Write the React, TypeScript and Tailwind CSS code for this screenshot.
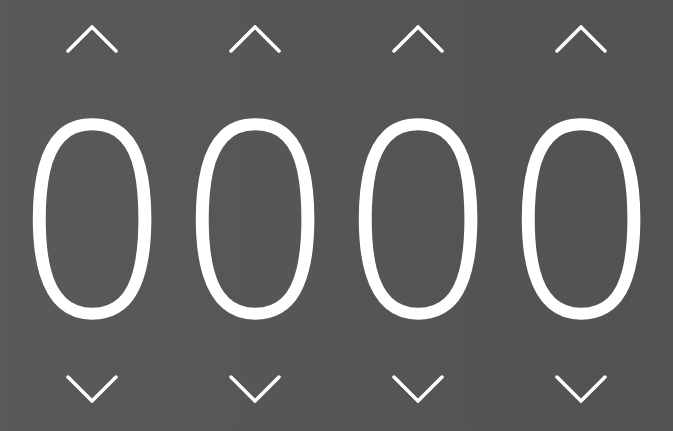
// Chevron drawn to match the thin wide carets of the picker
function Caret({ dir }: { dir: 'up' | 'down' }) {
    const points = dir === 'up' ? '2,26 26,2 50,26' : '2,2 26,26 50,2';
    return (
        <svg width="52" height="28" viewBox="0 0 52 28" fill="none">
            <polyline points={points} stroke="white" strokeWidth="3.5" strokeLinecap="round" strokeLinejoin="miter" />
        </svg>
    );
}

const digits = ['0', '0', '0', '0'];

export default function App() {
    return (
        <div className="w-full h-screen overflow-hidden bg-gradient-to-r from-[#5a5858] to-[#535151] flex justify-center">
            {digits.map((d, i) => (
                <div key={i} className="w-[163px] flex flex-col items-center">
                    <div className="mt-[25px]">
                        <Caret dir="up" />
                    </div>
                    <div
                        className="mt-[21px] h-[282px] text-white text-[274px] leading-none font-light scale-x-[0.95]"
                        style={{ fontFamily: '"Open Sans", sans-serif' }}
                    >
                        {d}
                    </div>
                    <div className="mt-[19px]">
                        <Caret dir="down" />
                    </div>
                </div>
            ))}
        </div>
    );
}
